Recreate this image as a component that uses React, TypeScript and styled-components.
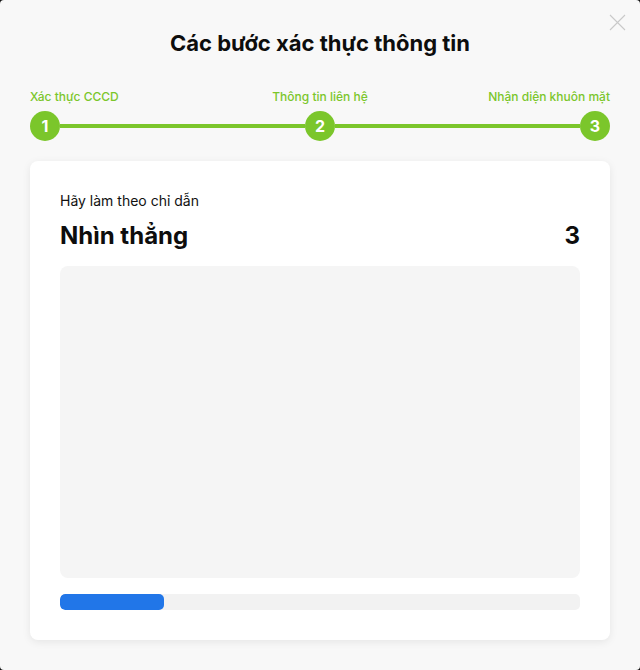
import React from "react";
import styled, { createGlobalStyle } from "styled-components";

const GREEN = "#7bc62b";

const Global = createGlobalStyle`
  html, body {
    margin: 0;
    padding: 0;
    background: #111;
  }
  body {
    font-family: Inter, "Noto Sans", "Liberation Sans", sans-serif;
  }
  * { box-sizing: border-box; }
`;

const Modal = styled.div`
  position: relative;
  width: 640px;
  height: 670px;
  background: #f8f8f8;
  border-radius: 4px;
  padding: 30px 30px 30px;
  display: flex;
  flex-direction: column;
`;

const Close = styled.button`
  position: absolute;
  top: 14px;
  right: 14px;
  width: 17px;
  height: 17px;
  padding: 0;
  border: none;
  background: transparent;
  cursor: pointer;
  display: flex;
`;

const Title = styled.h1`
  margin: 0;
  text-align: center;
  font-size: 22px;
  line-height: 27px;
  font-weight: 700;
  color: #0d0d0d;
`;

const Stepper = styled.div`
  margin-top: 32px;
  display: flex;
  flex-direction: column;
  gap: 6px;
`;

const Labels = styled.div`
  display: grid;
  grid-template-columns: 1fr auto 1fr;
`;

const Label = styled.span<{ $align: "start" | "center" | "end" }>`
  justify-self: ${(p) => p.$align};
  font-size: 12px;
  line-height: 16px;
  font-weight: 500;
  color: ${GREEN};
  white-space: nowrap;
`;

const Track = styled.div`
  display: flex;
  align-items: center;
`;

const Dot = styled.div`
  width: 30px;
  height: 30px;
  border-radius: 50%;
  background: ${GREEN};
  color: #fff;
  font-size: 16px;
  font-weight: 700;
  display: flex;
  align-items: center;
  justify-content: center;
  flex: none;
`;

const Line = styled.div`
  flex: 1;
  height: 4px;
  background: ${GREEN};
`;

const Card = styled.div`
  margin-top: 20px;
  flex: 1;
  background: #fff;
  border-radius: 8px;
  box-shadow: 0 2px 8px rgba(0, 0, 0, 0.08);
  padding: 30px;
  display: flex;
  flex-direction: column;
`;

const Hint = styled.div`
  font-size: 14px;
  line-height: 20px;
  color: #111;
`;

const HeadRow = styled.div`
  margin-top: 11px;
  display: flex;
  justify-content: space-between;
  align-items: center;
  font-size: 24px;
  line-height: 28px;
  font-weight: 700;
  color: #0d0d0d;
`;

const Preview = styled.div`
  margin-top: 16px;
  height: 312px;
  background: #f5f5f5;
  border-radius: 8px;
`;

const Progress = styled.div`
  margin-top: 16px;
  height: 16px;
  background: #f2f2f2;
  border-radius: 5px;
  overflow: hidden;
`;

const Fill = styled.div`
  height: 100%;
  background: #2176e8;
  border-radius: 5px;
`;

export default function App() {
  const progress = 0.2;
  return (
    <>
      <Global />
      <Modal>
        <Close aria-label="Đóng">
          <svg width="17" height="17" viewBox="0 0 17 17">
            <path d="M1 1 L16 16 M16 1 L1 16" stroke="#c9c9c9" strokeWidth="1.1" fill="none" />
          </svg>
        </Close>
        <Title>Các bước xác thực thông tin</Title>
        <Stepper>
          <Labels>
            <Label $align="start">Xác thực CCCD</Label>
            <Label $align="center">Thông tin liên hệ</Label>
            <Label $align="end">Nhận diện khuôn mặt</Label>
          </Labels>
          <Track>
            <Dot>1</Dot>
            <Line />
            <Dot>2</Dot>
            <Line />
            <Dot>3</Dot>
          </Track>
        </Stepper>
        <Card>
          <Hint>Hãy làm theo chỉ dẫn</Hint>
          <HeadRow>
            <span>Nhìn thẳng</span>
            <span>3</span>
          </HeadRow>
          <Preview />
          <Progress>
            <Fill style={{ width: `${progress * 100}%` }} />
          </Progress>
        </Card>
      </Modal>
    </>
  );
}
